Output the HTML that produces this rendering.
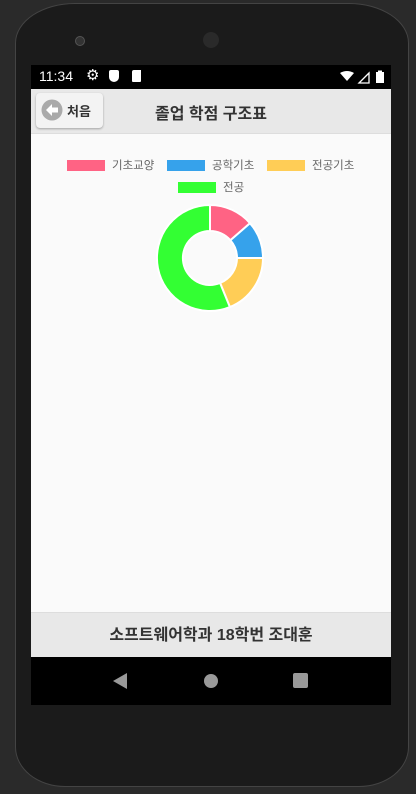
<!DOCTYPE html>
<html><head><meta charset="utf-8"><style>
body{margin:0;width:416px;height:794px;background:#2a2a2a;position:relative;overflow:hidden;font-family:"Liberation Sans","Noto Sans CJK KR",sans-serif}
.phone{position:absolute;left:15px;top:3px;width:394px;height:784px;background:#1b1b1b;border-radius:60px 60px 50px 50px/40px 40px 40px 40px;border:1px solid #444;box-sizing:border-box}
.screen{position:absolute;left:31px;top:65px;width:360px;height:640px;background:#fafafa}
.status{position:absolute;left:0;top:0;width:360px;height:24px;background:#000;color:#fff;font-size:14px}
.header{position:absolute;top:24px;left:0;width:360px;height:44px;background:#e8e8e8;border-bottom:1px solid #ddd}
.btn{position:absolute;left:5px;top:4px;width:67px;height:35px;background:#f3f3f3;border-radius:4px;box-shadow:0 1px 2px rgba(0,0,0,.3)}
.footer{position:absolute;top:547px;left:0;width:360px;height:45px;background:#e8e8e8;border-top:1px solid #ddd;text-align:center;line-height:45px;font-size:16px;font-weight:bold;color:#333}
.nav{position:absolute;top:592px;left:0;width:360px;height:48px;background:#000}
.leg{position:absolute;font-size:11.5px;color:#666}
.sw{position:absolute;width:38px;height:11px}
</style></head><body>
<div class="phone"></div>
<div style="position:absolute;left:75px;top:36px;width:8px;height:8px;border-radius:50%;background:#333;border:1px solid #555"></div>
<div style="position:absolute;left:203px;top:32px;width:16px;height:16px;border-radius:50%;background:#2a2a2a"></div>
<div class="screen">
 <div class="status">
  <span style="position:absolute;left:8px;top:3px">11:34</span>
  <span style="position:absolute;left:55px;top:1px;font-size:15px">⚙</span>
  <div style="position:absolute;left:78px;top:5px;width:10px;height:12px;background:#fff;border-radius:2px 2px 5px 5px"></div>
  <div style="position:absolute;left:101px;top:5px;width:9px;height:12px;background:#fff;border-radius:2px 0 1px 1px"></div>
  <svg style="position:absolute;left:306px;top:5px" width="50" height="15"><path d="M3 3 Q10 -1 17 3 L10 11Z" fill="#fff"/><path d="M22 13 L32 3 L32 13Z" fill="none" stroke="#fff" stroke-width="1.3"/><rect x="39" y="2" width="8" height="11" fill="#fff"/><rect x="41" y="0.5" width="4" height="2" fill="#fff"/></svg>
 </div>
 <div class="header">
  <div class="btn">
   <svg style="position:absolute;left:5px;top:6px" width="22" height="22"><circle cx="11" cy="11" r="10.5" fill="#aaa"/><path d="M5 11 L11 5 L11 8.5 L17 8.5 L17 13.5 L11 13.5 L11 17Z" fill="#fff"/></svg>
   <span style="position:absolute;left:31px;top:8px;font-size:13px;font-weight:bold;color:#333">처음</span>
  </div>
  <div style="position:absolute;left:0;width:360px;text-align:center;top:11px;font-size:16px;font-weight:bold;color:#333">졸업 학점 구조표</div>
 </div>
 <div class="sw" style="left:36px;top:95px;background:#ff6384"></div><span class="leg" style="left:81px;top:92px">기초교양</span>
 <div class="sw" style="left:136px;top:95px;background:#36a2eb"></div><span class="leg" style="left:181px;top:92px">공학기초</span>
 <div class="sw" style="left:236px;top:95px;background:#ffcd56"></div><span class="leg" style="left:281px;top:92px">전공기초</span>
 <div class="sw" style="left:147px;top:117px;background:#33ff33"></div><span class="leg" style="left:192px;top:114px">전공</span>
 <svg style="position:absolute;left:0;top:0" width="360" height="300" viewBox="31 65 360 300">
  <g stroke="#fff" stroke-width="2">
  <path d="M210 205 A53 53 0 0 1 250 223.2 L230.4 240.3 A27 27 0 0 0 210 231Z" fill="#ff6384"/>
  <path d="M250 223.2 A53 53 0 0 1 263 258 L237 258 A27 27 0 0 0 230.4 240.3Z" fill="#36a2eb"/>
  <path d="M263 258 A53 53 0 0 1 229.9 307.1 L220.1 283 A27 27 0 0 0 237 258Z" fill="#ffcd56"/>
  <path d="M229.9 307.1 A53 53 0 1 1 210 205 L210 231 A27 27 0 1 0 220.1 283Z" fill="#33ff33"/>
  </g>
 </svg>
 <div class="footer">소프트웨어학과 18학번 조대훈</div>
 <div class="nav">
  <svg width="360" height="48"><path d="M82 24 L96 16 L96 32Z" fill="#999"/><circle cx="180" cy="24" r="7" fill="#999"/><rect x="262" y="16" width="15" height="15" rx="2" fill="#999"/></svg>
 </div>
</div>
</body></html>
